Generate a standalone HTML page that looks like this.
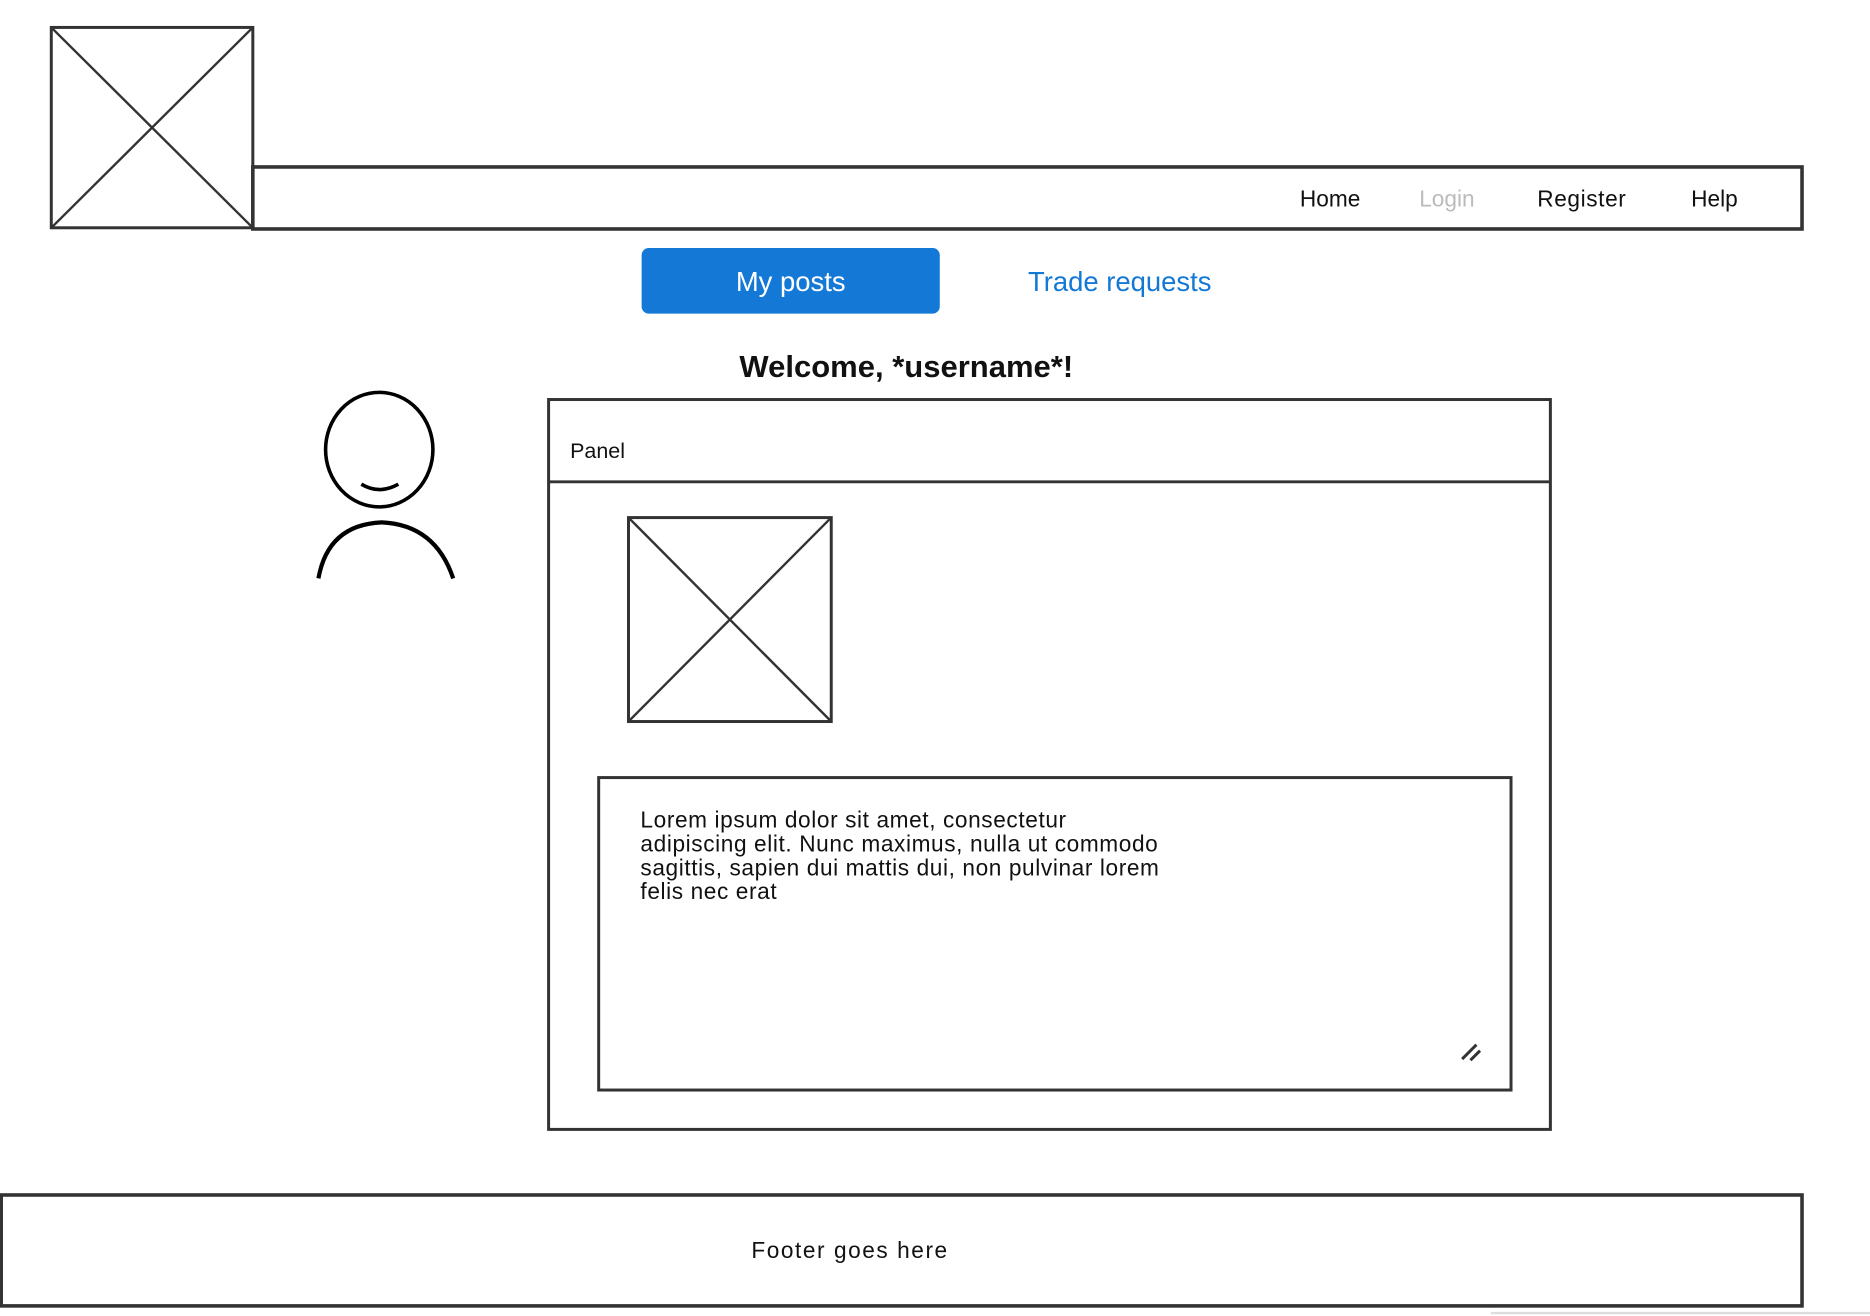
<!DOCTYPE html>
<html><head><meta charset="utf-8"><style>
html,body{margin:0;padding:0;background:#fff;width:1870px;height:1316px;overflow:hidden}
#s{position:absolute;left:0;top:0;width:1568px;height:1103px;transform:scale(1.1926);transform-origin:0 0;font-family:"Liberation Sans",sans-serif;color:#111}
.a{position:absolute;white-space:nowrap}
</style></head><body><div id="s">
<svg class="a" style="left:0;top:0" width="1568" height="1103">
<g stroke="#333" stroke-width="2" fill="none">
<rect x="43" y="23" width="169" height="168" stroke-width="2.5"/>
<line x1="43" y1="23" x2="212" y2="191"/><line x1="212" y1="23" x2="43" y2="191"/>
<rect x="212" y="140" width="1299" height="52" stroke-width="3"/>
<rect x="460" y="335" width="840" height="612" stroke-width="2.5"/>
<line x1="460" y1="404" x2="1300" y2="404" stroke-width="2.5"/>
<rect x="527" y="434" width="170" height="171" stroke-width="2.5"/>
<line x1="527" y1="434" x2="697" y2="605"/><line x1="697" y1="434" x2="527" y2="605"/>
<rect x="502" y="652" width="765" height="262" stroke-width="2.5"/>
<line x1="1226" y1="888" x2="1238" y2="876" stroke-width="2.5"/><line x1="1233" y1="889" x2="1241" y2="881" stroke-width="2.5"/>
<rect x="1" y="1002" width="1510" height="93" stroke-width="3"/>
<ellipse cx="318" cy="377" rx="45" ry="48" stroke="#000" stroke-width="3"/>
<path d="M303 406 Q318 415 334 406" stroke="#000" stroke-width="3"/>
<path d="M267 485 Q275 440 320 438 Q365 440 380 485" stroke="#000" stroke-width="3.5"/>
</g>
<line x1="1250" y1="1101" x2="1568" y2="1101" stroke="#ddd" stroke-width="2"/>
</svg>
<div class="a" style="left:1090px;top:157px;font-size:19px">Home</div>
<div class="a" style="left:1190px;top:157px;font-size:19px;color:#bbb">Login</div>
<div class="a" style="left:1289px;top:157px;font-size:19px;letter-spacing:0.5px">Register</div>
<div class="a" style="left:1418px;top:157px;font-size:19px">Help</div>
<div class="a" style="left:538px;top:208px;width:250px;height:55px;background:#1478d6;border-radius:6px;color:#fff;font-size:23px;line-height:57px;text-align:center">My posts</div>
<div class="a" style="left:862px;top:223px;font-size:23px;color:#1478d6">Trade requests</div>
<div class="a" style="left:620px;top:292px;font-size:26px;font-weight:bold">Welcome, *username*!</div>
<div class="a" style="left:478px;top:368px;font-size:18px">Panel</div>
<div class="a" style="left:537px;top:679px;font-size:19px;line-height:20px;letter-spacing:0.5px">Lorem ipsum dolor sit amet, consectetur<br>adipiscing elit. Nunc maximus, nulla ut commodo<br>sagittis, sapien dui mattis dui, non pulvinar lorem<br>felis nec erat</div>
<div class="a" style="left:630px;top:1039px;font-size:19px;letter-spacing:1.3px">Footer goes here</div>
</div></body></html>
